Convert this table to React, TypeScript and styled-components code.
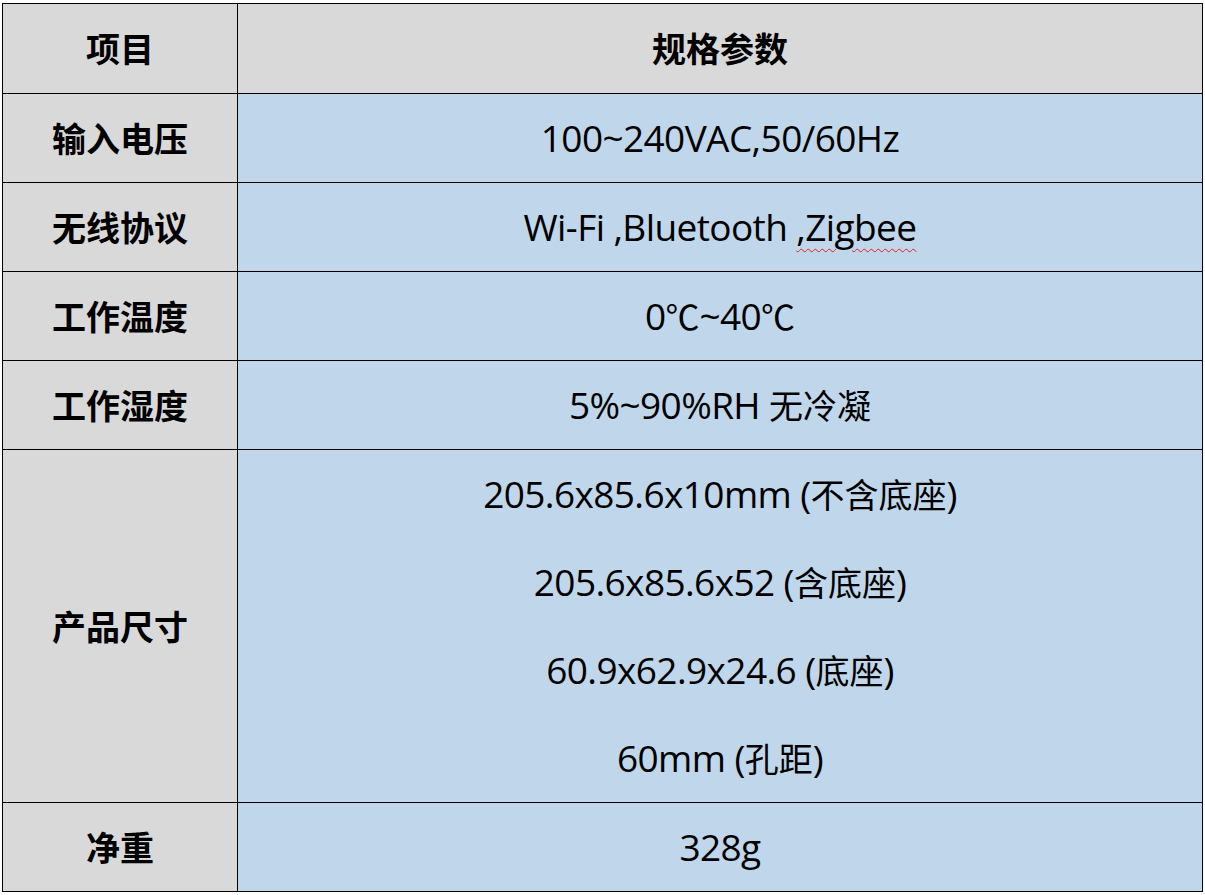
import React from "react";
import styled, { createGlobalStyle } from "styled-components";

const Global = createGlobalStyle`
  html, body {
    margin: 0;
    padding: 0;
    background: #ffffff;
  }
  body {
    font-family: "Noto Sans", "Noto Sans CJK SC", sans-serif;
    color: #000;
  }
`;

const Page = styled.div`
  padding: 3px 0 0 2px;
`;

const Table = styled.div`
  width: 1200px;
  display: grid;
  grid-template-columns: 235px 1fr;
  border-top: 1px solid #000;
  border-left: 1px solid #000;
`;

const Cell = styled.div<{ $head?: boolean; $tall?: boolean }>`
  min-height: ${({ $tall, $head }) => ($tall ? "352px" : $head ? "89px" : "88px")};
  display: flex;
  flex-direction: column;
  align-items: center;
  justify-content: center;
  border-right: 1px solid #000;
  border-bottom: 1px solid #000;
  background: ${({ $head }) => ($head ? "#d9d9d9" : "#c0d7eb")};
  font-size: ${({ $head }) => ($head ? "34px" : "37px")};
  font-weight: ${({ $head }) => ($head ? 700 : 400)};
  font-family: ${({ $head }) =>
    $head
      ? `"Noto Sans CJK SC", sans-serif`
      : `"Open Sans", "Noto Sans CJK SC", sans-serif`};
  letter-spacing: ${({ $head }) => ($head ? "0px" : "-0.6px")};
  line-height: 1.2;
`;

const LabelCell = styled(Cell)`
  background: #d9d9d9;
  font-weight: 700;
  font-size: 34px;
  letter-spacing: 0;
  font-family: "Noto Sans CJK SC", sans-serif;
`;

const Text = styled.span`
  white-space: nowrap;
`;

const Cjk = styled.span`
  font-size: 34px;
  font-family: "Noto Sans CJK SC", sans-serif;
  letter-spacing: 0;
`;

const Line = styled.div`
  height: 88px;
  display: flex;
  align-items: center;
  white-space: nowrap;
`;

const Spell = styled.span`
  text-decoration: underline wavy #e02020;
  text-decoration-thickness: 1px;
  text-underline-offset: 7px;
`;

const rows: { label: string; value: React.ReactNode }[] = [
  { label: "输入电压", value: "100~240VAC,50/60Hz" },
  {
    label: "无线协议",
    value: (
      <>
        Wi-Fi ,Bluetooth <Spell>,Zigbee</Spell>
      </>
    ),
  },
  {
    label: "工作温度",
    value: (
      <>
        0<Cjk>℃</Cjk>~40<Cjk>℃</Cjk>
      </>
    ),
  },
  {
    label: "工作湿度",
    value: (
      <>
        5%~90%RH <Cjk>无冷凝</Cjk>
      </>
    ),
  },
];

const sizes: [string, string][] = [
  ["205.6x85.6x10mm (", "不含底座"],
  ["205.6x85.6x52 (", "含底座"],
  ["60.9x62.9x24.6 (", "底座"],
  ["60mm (", "孔距"],
];

export default function App() {
  return (
    <Page>
      <Global />
      <Table>
        <Cell $head>项目</Cell>
        <Cell $head>规格参数</Cell>
        {rows.map((r) => (
          <React.Fragment key={r.label}>
            <LabelCell>{r.label}</LabelCell>
            <Cell>
              <Text>{r.value}</Text>
            </Cell>
          </React.Fragment>
        ))}
        <LabelCell $tall>产品尺寸</LabelCell>
        <Cell $tall>
          {sizes.map(([a, b]) => (
            <Line key={a}>
              <Text>
                {a}
                <Cjk>{b}</Cjk>)
              </Text>
            </Line>
          ))}
        </Cell>
        <LabelCell>净重</LabelCell>
        <Cell>
          <Text>328g</Text>
        </Cell>
      </Table>
    </Page>
  );
}
